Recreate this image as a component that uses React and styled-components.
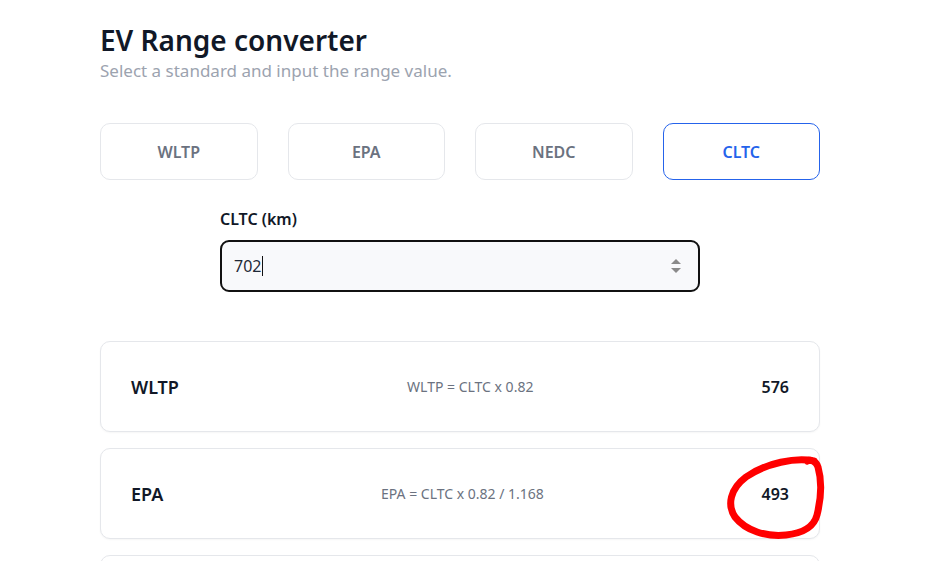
import React from "react";
import styled, { createGlobalStyle } from "styled-components";

const Global = createGlobalStyle`
  html, body { margin: 0; padding: 0; background: #ffffff; }
  body { font-family: "Noto Sans", "Open Sans", sans-serif; color: #111827; }
  * { box-sizing: border-box; }
`;

const Page = styled.div`
  width: 720px;
  margin-left: 100px;
  padding-top: 22px;
`;

const Title = styled.h1`
  margin: 0;
  font-size: 28px;
  line-height: 36px;
  font-weight: 600;
  color: #111827;
`;

const Subtitle = styled.p`
  margin: 0;
  font-size: 17px;
  line-height: 26px;
  color: #9ca3af;
`;

const Tabs = styled.div`
  display: grid;
  grid-template-columns: repeat(4, 1fr);
  gap: 30px;
  margin-top: 39px;
`;

const Tab = styled.button`
  height: 57px;
  border-radius: 10px;
  background: #fff;
  border: 1px solid ${(p) => (p.$active ? "#2563eb" : "#e5e7eb")};
  color: ${(p) => (p.$active ? "#2563eb" : "#6b7280")};
  font-family: inherit;
  font-size: 16px;
  font-weight: 600;
  cursor: pointer;
`;

const Field = styled.div`
  width: 480px;
  margin: 27px auto 0;
  display: flex;
  flex-direction: column;
  gap: 9px;
`;

const Label = styled.label`
  font-size: 16px;
  font-weight: 600;
  line-height: 24px;
  color: #111827;
`;

const InputBox = styled.div`
  height: 52px;
  border: 2px solid #111111;
  border-radius: 9px;
  background: #f8f9fb;
  display: flex;
  align-items: center;
  padding: 0 12px 0 12px;
`;

const Value = styled.span`
  font-size: 16px;
  color: #1f2937;
  flex: 1;
  display: flex;
  align-items: center;
`;

const Caret = styled.span`
  display: inline-block;
  width: 1px;
  height: 20px;
  background: #111;
  margin-left: 1px;
`;

const Spinner = styled.svg`
  width: 12px;
  height: 18px;
  margin-right: 4px;
`;

const Results = styled.div`
  margin-top: 49px;
  display: flex;
  flex-direction: column;
  gap: 16px;
`;

const Card = styled.div`
  position: relative;
  height: 91px;
  border: 1px solid #e5e7eb;
  border-radius: 10px;
  background: #fff;
  box-shadow: 0 1px 2px rgba(0, 0, 0, 0.04);
  display: flex;
  align-items: center;
  justify-content: space-between;
  padding: 0 30px;
`;

const CardName = styled.span`
  font-size: 18px;
  font-weight: 600;
  color: #111827;
`;

const Formula = styled.span`
  font-size: 14px;
  color: #6b7280;
`;

const Result = styled.span`
  font-size: 16px;
  font-weight: 600;
  color: #111827;
`;

const Annotation = styled.svg`
  position: absolute;
  left: 625px;
  top: 6px;
  width: 100px;
  height: 84px;
  overflow: visible;
  pointer-events: none;
`;

const tabs = ["WLTP", "EPA", "NEDC", "CLTC"];
const rows = [
  { name: "WLTP", formula: "WLTP = CLTC x 0.82", value: "576" },
  { name: "EPA", formula: "EPA = CLTC x 0.82 / 1.168", value: "493", circled: true },
  { name: "NEDC", formula: "NEDC = CLTC x 0.82 / 0.91", value: "633" },
];

export default function App() {
  return (
    <>
      <Global />
      <Page>
        <Title>EV Range converter</Title>
        <Subtitle>Select a standard and input the range value.</Subtitle>
        <Tabs>
          {tabs.map((t) => (
            <Tab key={t} $active={t === "CLTC"}>
              {t}
            </Tab>
          ))}
        </Tabs>
        <Field>
          <Label>CLTC (km)</Label>
          <InputBox>
            <Value>
              702
              <Caret />
            </Value>
            <Spinner viewBox="0 0 12 18">
              <path d="M6 2 L11 7 L1 7 Z" fill="#8a8a8a" />
              <path d="M6 16 L11 11 L1 11 Z" fill="#8a8a8a" />
            </Spinner>
          </InputBox>
        </Field>
        <Results>
          {rows.map((r) => (
            <Card key={r.name}>
              <CardName>{r.name}</CardName>
              <Formula>{r.formula}</Formula>
              <Result>{r.value}</Result>
              {r.circled && (
                <Annotation viewBox="0 0 100 84">
                  <path
                    d="M88 6 C70 2 40 8 20 22 C4 34 1 50 9 62 C20 76 40 82 60 80 C78 78 88 72 91 60 C95 44 96 26 92 12 C90 6 85 4 81 6"
                    fill="none"
                    stroke="#ff0000"
                    strokeWidth="7"
                    strokeLinecap="round"
                    strokeLinejoin="round"
                  />
                </Annotation>
              )}
            </Card>
          ))}
        </Results>
      </Page>
    </>
  );
}
